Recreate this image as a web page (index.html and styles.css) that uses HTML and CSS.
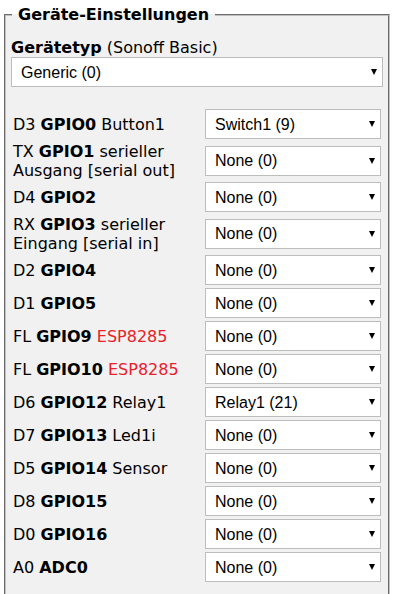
FILE: index.html
```html
<!DOCTYPE html>
<html lang="de">
<head>
<meta charset="utf-8">
<title>Geräte-Einstellungen</title>
<link rel="stylesheet" href="styles.css">
</head>
<body>
<fieldset class="settings">
  <legend class="settings-title">Geräte-Einstellungen</legend>
  <div class="device-type">
    <div class="device-label"><b>Gerätetyp</b> (Sonoff Basic)</div>
    <div class="select-wrap"><select class="select"><option>Generic (0)</option></select></div>
  </div>
  <div class="gpio-grid">
    <div class="gpio-label">D3 <b>GPIO0</b> Button1</div>
    <div class="select-wrap"><select class="select"><option>Switch1 (9)</option></select></div>

    <div class="gpio-label">TX <b>GPIO1</b> serieller Ausgang [serial out]</div>
    <div class="select-wrap"><select class="select"><option>None (0)</option></select></div>

    <div class="gpio-label">D4 <b>GPIO2</b></div>
    <div class="select-wrap"><select class="select"><option>None (0)</option></select></div>

    <div class="gpio-label">RX <b>GPIO3</b> serieller Eingang [serial in]</div>
    <div class="select-wrap"><select class="select"><option>None (0)</option></select></div>

    <div class="gpio-label">D2 <b>GPIO4</b></div>
    <div class="select-wrap"><select class="select"><option>None (0)</option></select></div>

    <div class="gpio-label">D1 <b>GPIO5</b></div>
    <div class="select-wrap"><select class="select"><option>None (0)</option></select></div>

    <div class="gpio-label">FL <b>GPIO9</b> <span class="warn">ESP8285</span></div>
    <div class="select-wrap"><select class="select"><option>None (0)</option></select></div>

    <div class="gpio-label">FL <b>GPIO10</b> <span class="warn">ESP8285</span></div>
    <div class="select-wrap"><select class="select"><option>None (0)</option></select></div>

    <div class="gpio-label">D6 <b>GPIO12</b> Relay1</div>
    <div class="select-wrap"><select class="select"><option>Relay1 (21)</option></select></div>

    <div class="gpio-label">D7 <b>GPIO13</b> Led1i</div>
    <div class="select-wrap"><select class="select"><option>None (0)</option></select></div>

    <div class="gpio-label">D5 <b>GPIO14</b> Sensor</div>
    <div class="select-wrap"><select class="select"><option>None (0)</option></select></div>

    <div class="gpio-label">D8 <b>GPIO15</b></div>
    <div class="select-wrap"><select class="select"><option>None (0)</option></select></div>

    <div class="gpio-label">D0 <b>GPIO16</b></div>
    <div class="select-wrap"><select class="select"><option>None (0)</option></select></div>

    <div class="gpio-label">A0 <b>ADC0</b></div>
    <div class="select-wrap"><select class="select"><option>None (0)</option></select></div>
  </div>
</fieldset>
</body>
</html>
```
FILE: styles.css
```css
html, body {
  margin: 0;
  padding: 0;
  background: #ffffff;
}

body {
  font-family: "DejaVu Sans", Verdana, sans-serif;
  font-size: 16px;
  color: #000;
}

.settings {
  box-sizing: border-box;
  width: 386px;
  margin: 5px 0 0 4px;
  padding: 0 5px 40px 5px;
  border: 2px groove #c0c0c0;
  background: #f1f1f1;
  min-width: 0;
}

.settings-title {
  margin-left: 1px;
  padding: 0 6px;
  font-weight: bold;
  line-height: 20px;
}

.device-type {
  padding-top: 13px;
}

.device-label {
  line-height: 19px;
}

.select-wrap {
  position: relative;
}

.select-wrap::after {
  content: "";
  position: absolute;
  right: 6px;
  top: 50%;
  margin-top: -3px;
  border-left: 3.5px solid transparent;
  border-right: 3.5px solid transparent;
  border-top: 6px solid #000;
  pointer-events: none;
}

.select {
  -webkit-appearance: none;
  appearance: none;
  display: block;
  box-sizing: border-box;
  width: 100%;
  height: 30px;
  margin: 0;
  padding: 0 20px 0 9px;
  border: 1px solid #bdbdbd;
  border-radius: 0;
  background: #fff;
  color: #000;
  font-family: "Liberation Sans", Arial, sans-serif;
  font-size: 16px;
}

.gpio-grid {
  display: grid;
  grid-template-columns: 190px 1fr;
  column-gap: 2px;
  row-gap: 3px;
  align-items: center;
  padding: 0 2px;
  margin-top: 22px;
}

.gpio-label {
  line-height: 19px;
  margin: -0.5px 0;
}

.warn {
  color: #e8202a;
}
```
